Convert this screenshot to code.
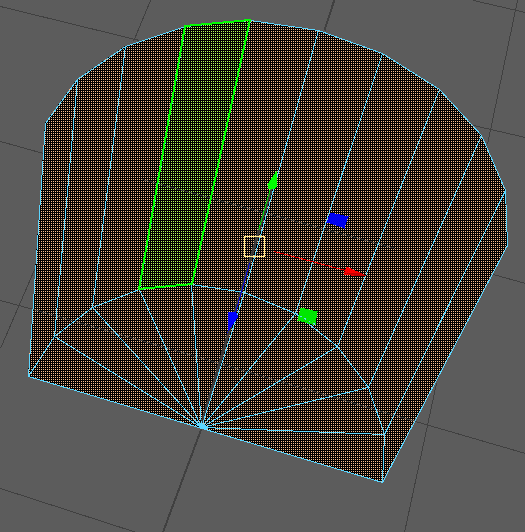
const CENTER = [201, 427]

const OUTER = [
  [28, 376], [45, 123], [77, 79], [125, 46], [185, 26], [250, 20], [318, 30],
  [382, 53], [439, 89], [481, 135], [505, 190], [507, 245], [382, 482],
]

const INNER = [
  [54, 336], [92, 307], [139, 289], [191, 284], [244, 292],
  [295, 313], [337, 346], [368, 387], [384, 434],
]

const SELECTED = [[185, 26], [250, 20], [192, 284], [139, 289]]

const GRID = [
  [0, 6, 139, 40],
  [150, 0, 133, 41],
  [0, 141, 43, 153],
  [473, 0, 525, 12],
  [517, 0, 487, 144],
  [473, 125, 525, 137],
  [493, 274, 525, 283],
  [0, 300, 33, 309],
  [35, 267, 0, 348],
  [0, 488, 136, 532],
  [415, 421, 525, 453],
  [436, 383, 404, 532],
]

// grid lines that show faintly through the mesh
const GHOST = [
  [142, 179, 395, 248],
  [33, 309, 175, 350],
  [175, 350, 415, 421],
]

const toPoints = (list) => list.map((p) => p.join(',')).join(' ')

function Line({ at, ...props }) {
  const [x1, y1, x2, y2] = at
  return <line x1={x1} y1={y1} x2={x2} y2={y2} {...props} />
}

function Dots({ id, fill }) {
  return (
    <pattern id={id} width="2" height="2" patternUnits="userSpaceOnUse">
      <rect width="2" height="2" fill="#000" />
      <rect x="1" y="1" width="1" height="1" fill={fill} />
    </pattern>
  )
}

function Mesh() {
  return (
    <g>
      <polygon points={toPoints(OUTER)} fill="url(#dots)" />
      <polygon points={toPoints(SELECTED)} fill="url(#dots-selected)" />
      <g transform="translate(0.5 0.5)" fill="none">
        <g stroke="#444" strokeOpacity="0.85">
          {GHOST.map((at) => <Line key={at.join()} at={at} />)}
        </g>
        <Line at={[200, 427, 271, 188]} stroke="#3c3c3c" strokeOpacity="0.85" strokeWidth="3" />
        <g stroke="#5cd6ff">
          <polygon points={toPoints(OUTER)} />
          <polyline points={toPoints([OUTER[0], ...INNER, OUTER[12]])} />
          {INNER.map((p, i) => (
            <g key={p.join()}>
              <Line at={[...OUTER[i + 2], ...p]} />
              <Line at={[...p, ...CENTER]} />
            </g>
          ))}
        </g>
        <path d="M197 425l4-3 2 4 4 2-4 1z" fill="#5cd6ff" />
      </g>
      <polygon points={toPoints(SELECTED)} fill="none" stroke="#00ff00" strokeWidth="2" />
    </g>
  )
}

function Manipulator() {
  return (
    <g transform="translate(0.5 0.5)">
      <polygon points="330,212 348,216 344,228 326,222" fill="#0000f0" />
      <polygon points="300,307 317,311 315,325 297,320" fill="#00e600" />
      <path d="M295 313l20 11" stroke="#5cd6ff" strokeDasharray="2 3" />

      <Line at={[258, 230, 270, 188]} stroke="#00e000" />
      <path d="M277 169l-10 15v4l5 1 4-2z" fill="#00ff00" />

      <Line at={[249, 263, 235, 312]} stroke="#0000e0" />
      <path d="M228 311h7l3 5-11 16z" fill="#0000ff" />

      <Line at={[274, 251, 345, 270]} stroke="#f00000" />
      <path d="M346 266l20 9-8 1-15-2z" fill="#ff0000" />
      <path d="M343 273l15 3 8-1-8-3z" fill="#c80000" />

      <rect x="244" y="236" width="20" height="20" fill="none" stroke="#ffee88" />
    </g>
  )
}

export default function App() {
  return (
    <main className="min-h-screen bg-[#5c5c5c]">
      <svg
        viewBox="0 0 525 532"
        className="block h-auto w-full"
        shapeRendering="crispEdges"
        role="img"
        aria-label="Perspective viewport"
      >
        <defs>
          <Dots id="dots" fill="#f5bd91" />
          <Dots id="dots-selected" fill="#b4ff5c" />
        </defs>
        <g transform="translate(0.5 0.5)" stroke="#404040">
          {GRID.map((at) => <Line key={at.join()} at={at} />)}
          <Line at={[334, -1, 324, 30]} strokeWidth="2" />
          <Line at={[201, 428, 162, 533]} strokeWidth="2" />
        </g>
        <Mesh />
        <Manipulator />
      </svg>
    </main>
  )
}
